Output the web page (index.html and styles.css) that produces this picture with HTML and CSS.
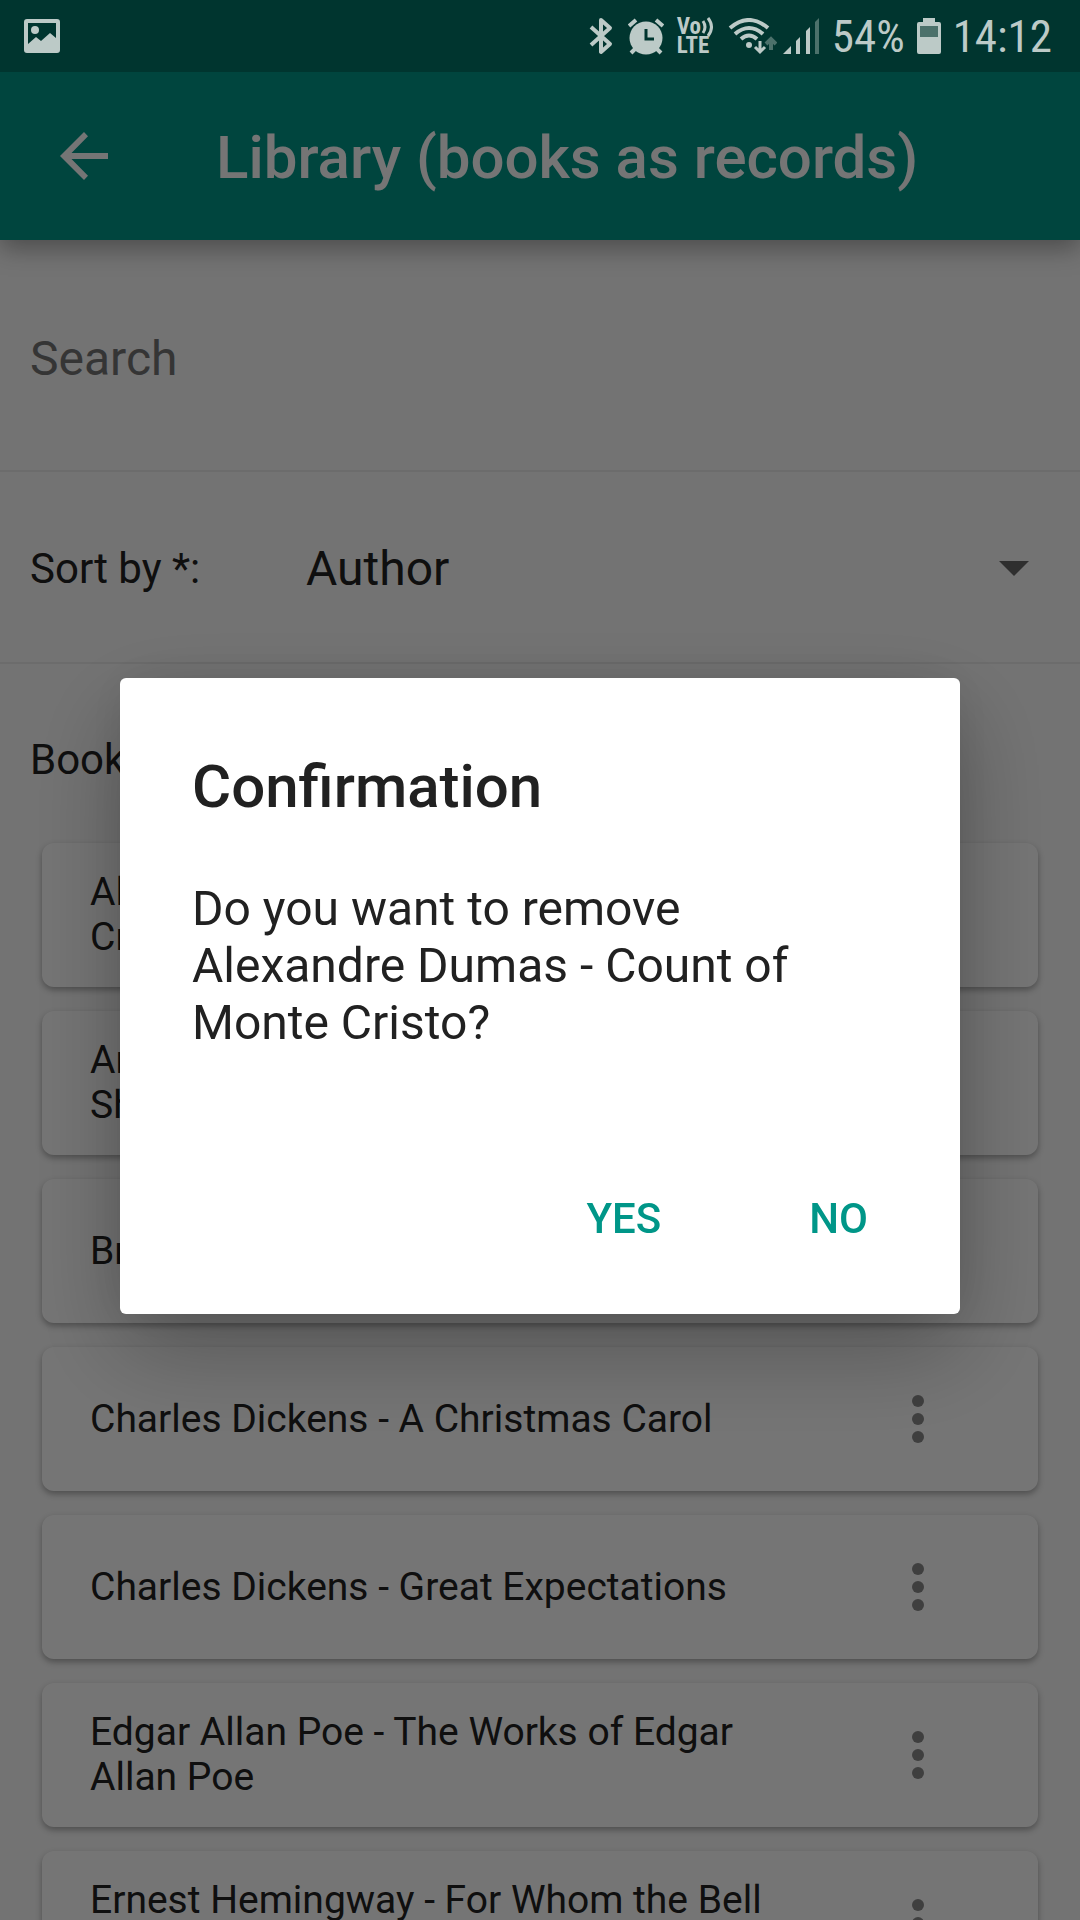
FILE: index.html
```html
<!DOCTYPE html>
<html lang="en">
<head>
<meta charset="utf-8">
<meta name="viewport" content="width=device-width, initial-scale=1">
<title>Library</title>
<link rel="stylesheet" href="styles.css">
</head>
<body>
<div class="status">
  <svg class="status-picture" width="36" height="34" viewBox="0 0 36 34" aria-hidden="true"><path fill="currentColor" fill-rule="evenodd" d="M3 0H33Q36 0 36 3V31Q36 34 33 34H3Q0 34 0 31V3Q0 0 3 0ZM4 4V25L12 18L17 22L26 14L32 19V4Z"/><circle cx="11" cy="11" r="4" fill="currentColor"/></svg>
  <svg width="24" height="38" viewBox="0 0 24 38" aria-hidden="true"><path d="M2 10L21 27L12 35V3L21 11L2 28" fill="none" stroke="currentColor" stroke-width="4" stroke-linejoin="round"/></svg>
  <svg class="gap-alarm" width="36" height="37" viewBox="0 0 36 37" aria-hidden="true"><g stroke="currentColor" stroke-width="4"><path d="M1 8L8 2M28 2L35 8M7 31L3 35M29 31L33 35"/></g><circle cx="18" cy="20" r="16.500" fill="currentColor"/><path d="M18 11V21H26" fill="none" stroke="#00352f" stroke-width="3"/></svg>
  <div class="volte gap-volte"><span>Vo<svg width="13" height="20" viewBox="0 0 13 20" aria-hidden="true"><path d="M2 4Q6 10 2 16M7 1Q14 10 7 19" fill="none" stroke="currentColor" stroke-width="3"/></svg></span><span>LTE</span></div>
  <svg class="gap-wifi" width="49" height="37" viewBox="0 0 49 37" aria-hidden="true"><g fill="none" stroke="currentColor" stroke-width="4"><path d="M2 10Q21 -6 40 10M7 16Q21 4 35 16M13 21Q21 14 29 21"/></g><circle cx="21" cy="27" r="3" fill="currentColor"/><path d="M32 23V33M27 29L32 34L37 29" fill="none" stroke="currentColor" stroke-width="3"/><path d="M43 32V22M38 26L43 21L48 26" fill="none" stroke="#4c716b" stroke-width="4"/></svg>
  <svg class="gap-signal" width="36" height="36" viewBox="0 0 36 36" aria-hidden="true"><path fill="currentColor" d="M0 36L8 28V36ZM13 36V23L17 19V36ZM23 36V13L27 9V36Z"/><path fill="#4c716b" d="M32 36V4L36 0V36Z"/></svg>
  <span class="status-text gap-percent">54%</span>
  <svg class="gap-battery" width="24" height="36" viewBox="0 0 24 36" aria-hidden="true"><path fill="currentColor" d="M6 0H18V4H22Q24 4 24 6V34Q24 36 22 36H2Q0 36 0 34V6Q0 4 2 4H6Z"/><path fill="#4c716b" d="M3 8H21V19H3Z"/></svg>
  <span class="status-text gap-clock">14:12</span>
</div>

<header class="toolbar">
  <button class="back" type="button" aria-label="Back"><svg width="48" height="48" viewBox="0 0 48 48" aria-hidden="true"><path fill="currentColor" d="M48 21V27H11.500L28 43.800L24 48L0 24L24 0L28 4.200L11.500 21Z"/></svg></button>
  <h1>Library (books as records)</h1>
</header>

<main class="page">
  <div class="search-row"><input class="search" type="text" placeholder="Search" aria-label="Search"></div>
  <div class="sort-row">
    <label for="sort">Sort by *:</label>
    <div class="select-box">
      <select id="sort"><option>Author</option><option>Title</option></select>
      <svg class="caret" width="30" height="15" viewBox="0 0 30 15" aria-hidden="true"><path fill="currentColor" d="M0 0H30L15 15Z"/></svg>
    </div>
  </div>
  <h2 class="list-label">Books:</h2>
  <ul class="books">
    <li><span>Alexandre Dumas - Count of Monte Cristo</span><button type="button" aria-label="Options"><i></i><i></i><i></i></button></li>
    <li><span>Arthur Conan Doyle - Adventures of Sherlock Holmes</span><button type="button" aria-label="Options"><i></i><i></i><i></i></button></li>
    <li><span>Bram Stoker - Dracula</span><button type="button" aria-label="Options"><i></i><i></i><i></i></button></li>
    <li><span>Charles Dickens - A Christmas Carol</span><button type="button" aria-label="Options"><i></i><i></i><i></i></button></li>
    <li><span>Charles Dickens - Great Expectations</span><button type="button" aria-label="Options"><i></i><i></i><i></i></button></li>
    <li><span>Edgar Allan Poe - The Works of Edgar Allan Poe</span><button type="button" aria-label="Options"><i></i><i></i><i></i></button></li>
    <li><span>Ernest Hemingway - For Whom the Bell Tolls</span><button type="button" aria-label="Options"><i></i><i></i><i></i></button></li>
  </ul>
</main>

<div class="overlay">
  <section class="dialog" role="alertdialog" aria-modal="true" aria-labelledby="dialog-title" aria-describedby="dialog-text">
    <h2 id="dialog-title">Confirmation</h2>
    <p id="dialog-text">Do you want to remove Alexandre Dumas - Count of Monte Cristo?</p>
    <div class="actions"><button type="button">YES</button><button type="button">NO</button></div>
  </section>
</div>
</body>
</html>
```
FILE: styles.css
```css
* { box-sizing: border-box; }

body {
  margin: 0;
  height: 100vh;
  display: flex;
  flex-direction: column;
  overflow: hidden;
  background: #fafafa;
  color: #212121;
  font-family: Roboto, "Liberation Sans", sans-serif;
}

h1, h2, p, ul { margin: 0; padding: 0; }
button, input, select { font: inherit; color: inherit; border: 0; background: none; padding: 0; margin: 0; }
svg { display: block; flex: none; }

/* Status bar */
.status {
  flex: none;
  height: 72px;
  padding: 0 28px 0 24px;
  display: flex;
  align-items: center;
  background: #00352f;
  color: #bccac7;
  z-index: 3;
}
.status-picture { margin-right: auto; }
.status-text { padding-top: 2px; font: 45px/70px "Roboto Condensed", "Liberation Sans Narrow", Roboto, sans-serif; }
.gap-alarm { margin-left: 15px; }
.gap-volte { margin-left: 13px; }
.gap-wifi { margin-left: 15px; }
.gap-signal { margin-left: 6px; }
.gap-percent { margin-left: 13px; }
.gap-battery { margin-left: 12px; }
.gap-clock { margin-left: 12px; }
.volte { width: 36px; font: 700 23px/19px "Roboto Condensed", "Liberation Sans Narrow", Roboto, sans-serif; }
.volte span { display: flex; height: 19px; }

/* Toolbar */
.toolbar {
  flex: none;
  height: 168px;
  padding: 0 60px;
  display: flex;
  align-items: center;
  gap: 108px;
  background: #009688;
  color: #fff;
  box-shadow: 0 8px 24px rgba(0, 0, 0, .35);
  z-index: 1;
}
.toolbar h1 { padding-top: 4px; font-size: 60px; line-height: 72px; font-weight: 500; white-space: nowrap; }

/* Page */
.page { flex: 1; min-height: 0; overflow: hidden; }
.search-row { height: 232px; padding: 6px 30px 0; display: flex; align-items: center; border-bottom: 2px solid #ebebeb; }
.search { width: 100%; height: 72px; font-size: 48px; outline: 0; }
.search::placeholder { color: #757575; opacity: 1; }
.sort-row {
  height: 192px;
  padding: 2px 30px 0;
  display: grid;
  grid-template-columns: 276px 1fr;
  align-items: center;
  border-bottom: 2px solid #ebebeb;
  font-size: 42px;
}
.select-box { display: grid; align-items: center; }
.select-box > * { grid-area: 1 / 1; }
.select-box select { appearance: none; width: 100%; height: 72px; font-size: 48px; outline: 0; }
.caret { justify-self: end; margin-right: 21px; color: #666; pointer-events: none; }
.list-label { padding: 66px 30px 53px; font-size: 42px; line-height: 60px; font-weight: 400; }
.books { padding: 0 42px; display: grid; gap: 24px; list-style: none; }
.books li {
  height: 144px;
  padding: 0 96px 0 48px;
  display: flex;
  align-items: center;
  justify-content: space-between;
  border-radius: 12px;
  background: #fff;
  box-shadow: 0 3px 6px rgba(0, 0, 0, .32);
  font-size: 39px;
  line-height: 45px;
}
.books span { width: 690px; }
.books button { width: 48px; height: 72px; display: flex; flex-direction: column; align-items: center; justify-content: center; gap: 6px; }
.books i { width: 12px; height: 12px; border-radius: 50%; background: #8a8a8a; }

/* Confirmation dialog */
.overlay {
  position: fixed;
  inset: 72px 0 0;
  z-index: 2;
  display: grid;
  place-items: center;
  padding: 0 120px;
  background: rgba(0, 0, 0, .54);
}
.dialog {
  width: 100%;
  max-width: 840px;
  padding: 73px 72px 60px;
  border-radius: 6px;
  background: #fff;
  box-shadow: 0 36px 96px rgba(0, 0, 0, .28), 0 0 48px rgba(0, 0, 0, .08);
}
.dialog h2 { font-size: 60px; line-height: 72px; font-weight: 500; }
.dialog p { margin-top: 57px; font-size: 48px; line-height: 57px; }
.actions { margin-top: 131px; display: flex; justify-content: flex-end; gap: 144px; padding-right: 18px; color: #009688; }
.actions button { height: 72px; padding: 0 2px; font-size: 42px; font-weight: 500; }
```
